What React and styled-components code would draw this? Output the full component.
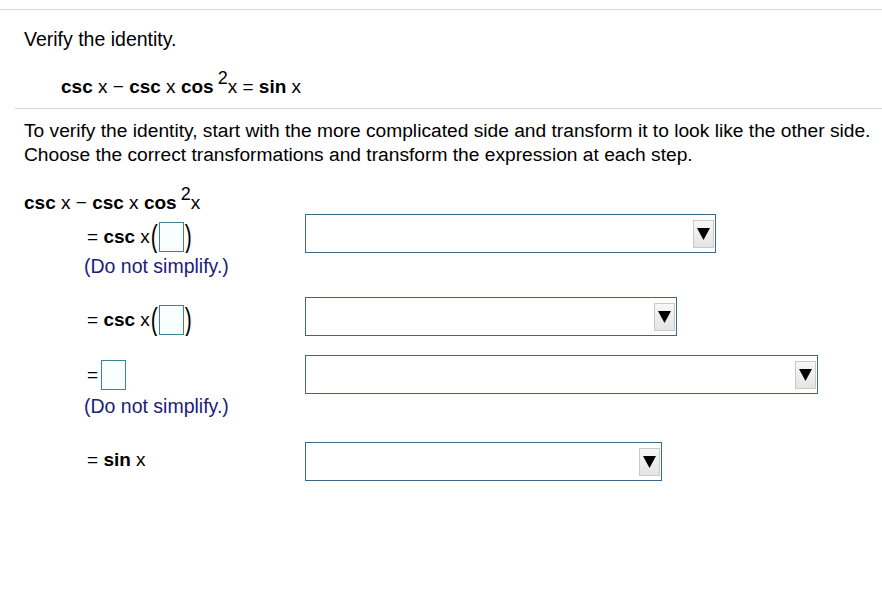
import React from 'react';
import styled, { createGlobalStyle } from 'styled-components';

const GlobalStyle = createGlobalStyle`
  body {
    margin: 0;
    background: #fff;
    font-family: "Liberation Sans", Arial, sans-serif;
    color: #000;
  }
`;

const Page = styled.div`
  width: 882px;
  height: 608px;
  overflow: hidden;
  padding-top: 9px;
  box-sizing: border-box;
`;

const Header = styled.div`
  border-top: 1px solid #d6d6d6;
  padding: 18px 0 0 24px;
`;

const Title = styled.div`
  font-size: 19.5px;
  line-height: 22px;
`;

const Identity = styled.div`
  font-size: 19px;
  line-height: 22px;
  padding: 26px 0 10px 37px;
`;

const Divider = styled.div`
  margin-left: 15px;
  border-top: 1px solid #d6d6d6;
`;

const Body = styled.div`
  padding: 10px 0 0 24px;
`;

const Intro = styled.p`
  margin: 0;
  font-size: 19.2px;
  line-height: 24px;
  white-space: nowrap;
`;

const Start = styled.div`
  font-size: 19px;
  line-height: 22px;
  margin-top: 25px;
`;

const Fn = styled.b`
  font-weight: bold;
`;

const Sup = styled.sup`
  font-size: 18px;
  vertical-align: 9px;
  line-height: 0;
  margin-left: 4px;
`;

const Steps = styled.div`
  display: flex;
  flex-direction: column;
`;

const Step = styled.div`
  display: flex;
  align-items: flex-start;
  margin-top: ${(p) => p.$gap}px;
`;

const Left = styled.div`
  width: 281px;
  padding-top: ${(p) => p.$lift}px;
  box-sizing: border-box;
`;

const Expr = styled.div`
  display: flex;
  align-items: center;
  height: 30px;
  padding-left: 63px;
  font-size: 19px;
  white-space: pre;
`;

const Paren = styled.span`
  display: inline-block;
  font-size: 21px;
  line-height: 20px;
  transform: scale(1, 1.5);
  margin: -3px 1px 0;
`;

const AnswerBox = styled.span`
  display: inline-block;
  width: 23px;
  height: 28px;
  border: 1px solid #3c8394;
  background: #f9ffff;
  margin-left: ${(p) => p.$ml || 0}px;
`;

const Note = styled.div`
  padding-left: 60px;
  margin-top: ${(p) => p.$mt}px;
  font-size: 19.5px;
  line-height: 22px;
  color: #20207a;
  white-space: nowrap;
`;

const Select = styled.div`
  width: ${(p) => p.$w}px;
  height: 39px;
  box-sizing: border-box;
  border: 1px solid #3e6685;
  background: #fff;
  display: flex;
  align-items: center;
  justify-content: flex-end;
  padding-right: 1px;
`;

const Arrow = styled.div`
  width: 21px;
  height: 28px;
  box-sizing: border-box;
  border: 1px solid #c9c9c9;
  background: linear-gradient(#f7f7f7, #e4e4e4);
  display: flex;
  align-items: center;
  justify-content: center;
`;

const Dropdown = ({ w }) => (
  <Select $w={w}>
    <Arrow>
      <svg width="13" height="12" viewBox="0 0 13 12">
        <path d="M0 0 H13 L6.5 12 Z" fill="#000" />
      </svg>
    </Arrow>
  </Select>
);

const App = () => (
  <>
    <GlobalStyle />
    <Page>
      <Header>
        <Title>Verify the identity.</Title>
        <Identity>
          <Fn>csc</Fn> x −  <Fn>csc</Fn> x <Fn>cos</Fn>
          <Sup>2</Sup>x = <Fn>sin</Fn> x
        </Identity>
      </Header>
      <Divider />
      <Body>
        <Intro>
          To verify the identity, start with the more complicated side and transform it to look like the other side.
        </Intro>
        <Intro>Choose the correct transformations and transform the expression at each step.</Intro>
        <Start>
          <Fn>csc</Fn> x −  <Fn>csc</Fn> x <Fn>cos</Fn>
          <Sup>2</Sup>x
        </Start>
        <Steps>
          <Step $gap={0}>
            <Left $lift={8}>
              <Expr>
                = <Fn>csc</Fn> x<Paren>(</Paren>
                <AnswerBox />
                <Paren>)</Paren>
              </Expr>
              <Note $mt={3}>(Do not simplify.)</Note>
            </Left>
            <Dropdown w={411} />
          </Step>
          <Step $gap={20}>
            <Left $lift={8}>
              <Expr>
                = <Fn>csc</Fn> x<Paren>(</Paren>
                <AnswerBox />
                <Paren>)</Paren>
              </Expr>
            </Left>
            <Dropdown w={372} />
          </Step>
          <Step $gap={19}>
            <Left $lift={5}>
              <Expr>
                =<AnswerBox $ml={3} />
              </Expr>
              <Note $mt={5}>(Do not simplify.)</Note>
            </Left>
            <Dropdown w={513} />
          </Step>
          <Step $gap={25}>
            <Left $lift={3}>
              <Expr>
                = <Fn>sin</Fn> x
              </Expr>
            </Left>
            <Dropdown w={357} />
          </Step>
        </Steps>
      </Body>
    </Page>
  </>
);

export default App;
